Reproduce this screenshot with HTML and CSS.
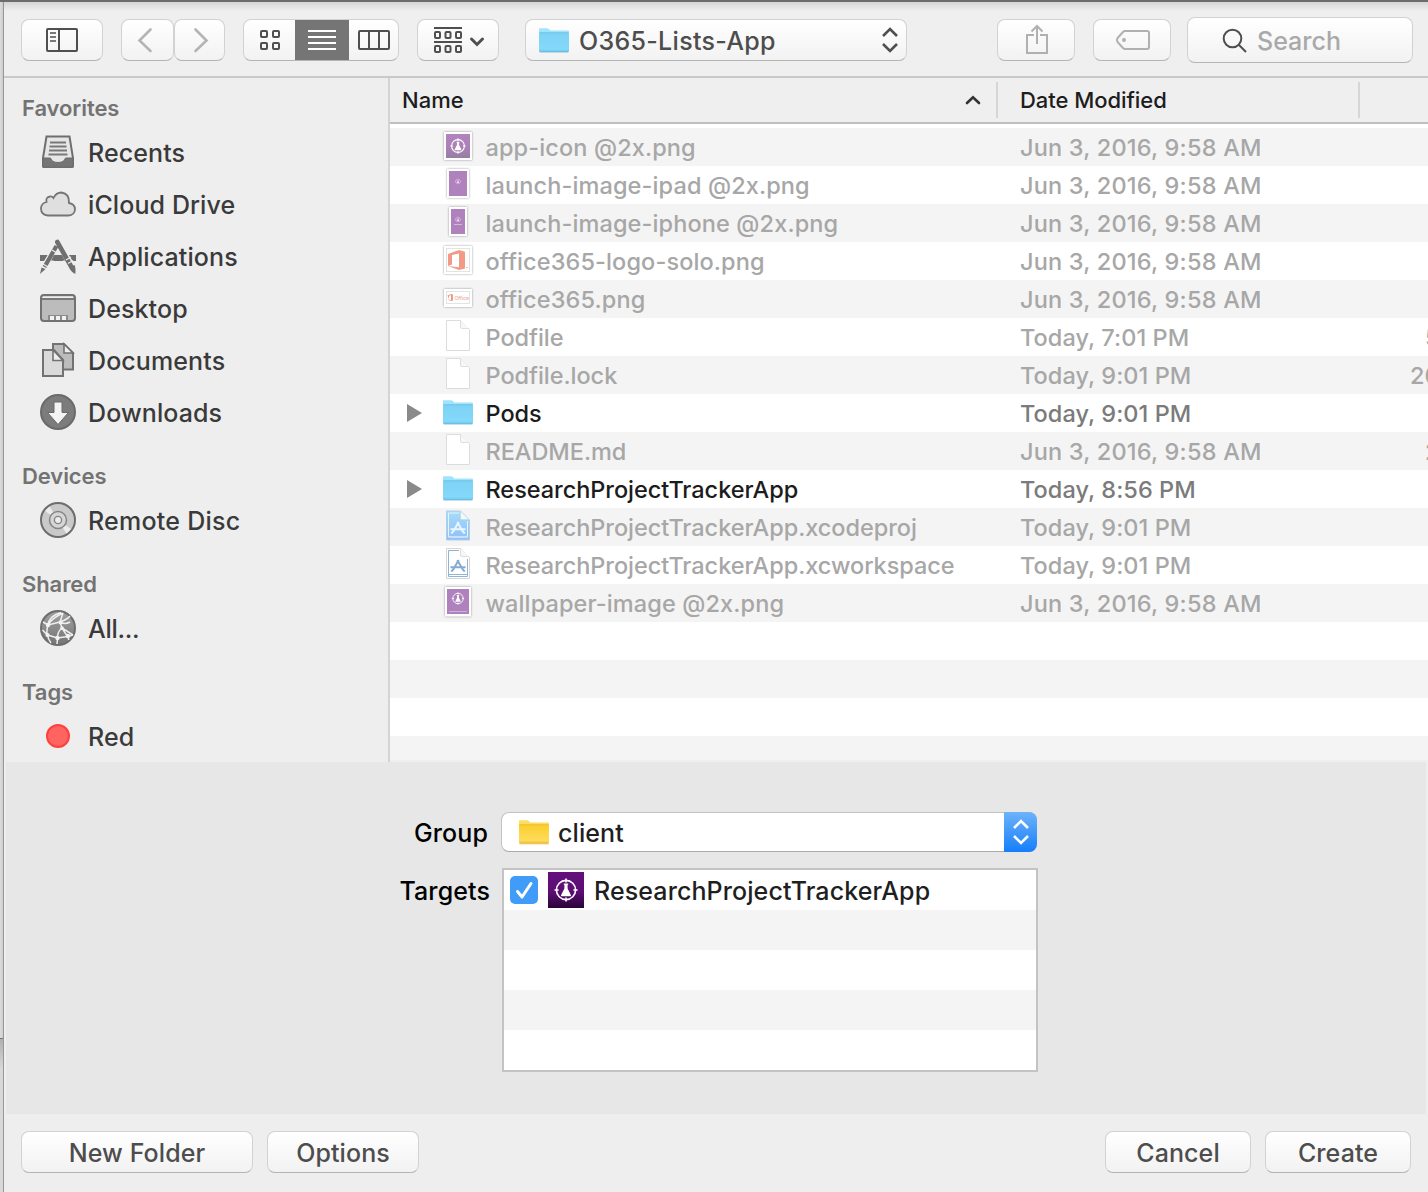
FILE: index.html
```html
<!DOCTYPE html>
<html lang="en">
<head>
<meta charset="utf-8">
<title>O365-Lists-App</title>
<link rel="stylesheet" href="styles.css">
</head>
<body>
<svg class="defs" width="0" height="0" aria-hidden="true">
  <defs>
    <linearGradient id="blueFolder" x1="0" y1="0" x2="0" y2="1"><stop offset="0" stop-color="#7dd3f5"/><stop offset="1" stop-color="#86dafb"/></linearGradient>
    <linearGradient id="goldFolder" x1="0" y1="0" x2="0" y2="1"><stop offset="0" stop-color="#fbce2c"/><stop offset="1" stop-color="#ffde68"/></linearGradient>
    <linearGradient id="fadedPurple" x1="0" y1="0" x2="0" y2="1"><stop offset="0" stop-color="#b184be"/><stop offset=".6" stop-color="#ab7fb7"/><stop offset="1" stop-color="#9480a0"/></linearGradient>
    <linearGradient id="deepPurple" x1="0" y1="0" x2="0" y2="1"><stop offset="0" stop-color="#640f7d"/><stop offset=".55" stop-color="#5c0e74"/><stop offset="1" stop-color="#2a0438"/></linearGradient>
    <linearGradient id="projBlue" x1="0" y1="0" x2="0" y2="1"><stop offset="0" stop-color="#a5dcf8"/><stop offset="1" stop-color="#8fbffa"/></linearGradient>
    <linearGradient id="globe" x1="0" y1="0" x2="0" y2="1"><stop offset="0" stop-color="#a2a2a2"/><stop offset="1" stop-color="#747474"/></linearGradient>
    <symbol id="folder-shape" viewBox="0 0 30 25">
      <path d="M0 3V1.2Q0 .2 1 .2H8Q9 .2 9.8 1L11.2 2.6H29Q30 2.6 30 3.6V6H0z" fill="#9fe3fc"/>
      <rect y="4.6" width="30" height="19.4" rx="1" fill="url(#blueFolder)"/>
      <path d="M.5 4.8H29.5" stroke="#68bfe2" stroke-width=".8"/>
      <path d="M0 22.2H30" stroke="#6dc6e8" stroke-width=".7"/>
      <path d="M.6 23.9H29.4" stroke="#52a9cd" stroke-width=".9"/>
    </symbol>
    <symbol id="flask" viewBox="0 0 24 24">
      <circle cx="12" cy="12" r="9.6" fill="none" stroke="#fff" stroke-width="1.6"/>
      <path d="M12 .5V4.6M12 19.4V23.5M.5 12H4.6M19.4 12H23.5" stroke="#fff" stroke-width="1.6"/>
      <path d="M9.8 5.6H14.2V6.8H13.6V10.4L17 17.2Q17.3 18.2 16.2 18.2H7.8Q6.7 18.2 7 17.2L10.4 10.4V6.8H9.8z" fill="#fff"/>
    </symbol>
    <symbol id="file-blank" viewBox="0 0 38 38">
      <path d="M7.5 2.5H21.5L30.5 11.5V32.5H7.5z" fill="#fff" stroke="#dcdcdc" stroke-width="1"/>
      <path d="M21.5 2.5V9Q21.5 10.5 23 10.5H30" fill="#f7f7f7" stroke="#dedede" stroke-width="1"/>
    </symbol>
    <symbol id="app-a" viewBox="0 0 18 14">
      <path d="M9.800 .5L3.500 11.500M8.200 .5L14.500 11.500M.5 8.800H17.500M3.500 11L1.500 13.600M14.500 11L16.500 13.600" fill="none" stroke="currentColor" stroke-width="2.200"/>
    </symbol>
  </defs>
</svg>

<div class="desktop">
  <div class="edge"><div class="edge-top"></div><div class="edge-bottom"></div></div>
  <main class="window">
    <header class="toolbar">
      <button class="btn tb w82"><svg viewBox="21 19 82 42" fill="none" stroke="#4f4f4f" stroke-width="2"><rect x="47" y="29" width="30" height="22" rx="1"/><path d="M59 29V51"/><path d="M50 33H56M50 37H56M50 41H56" stroke-width="1.6"/></svg></button>
      <div class="nav">
        <button class="btn tb w53"><svg viewBox="121 19 53 42" fill="none" stroke="#b4b4b4" stroke-width="2.6" stroke-linecap="round"><path d="M150.5 29.500L139.500 40.500L150.500 51"/></svg></button>
        <button class="btn tb w51"><svg viewBox="174 19 51 42" fill="none" stroke="#b4b4b4" stroke-width="2.6" stroke-linecap="round"><path d="M195.500 29.500L206.500 40.500L195.500 51"/></svg></button>
      </div>
      <div class="btn views">
        <svg class="v1" viewBox="243 19 52 42" fill="none" stroke="#4f4f4f" stroke-width="2"><rect x="261" y="31" width="6" height="6" rx="1"/><rect x="273" y="31" width="6" height="6" rx="1"/><rect x="261" y="43" width="6" height="6" rx="1"/><rect x="273" y="43" width="6" height="6" rx="1"/></svg>
        <svg class="v2" viewBox="295 19 54 42" stroke="#fff" stroke-width="2"><path d="M308 31H336M308 37H336M308 43H336M308 49H336"/></svg>
        <svg class="v3" viewBox="349 19 50 42" fill="none" stroke="#4f4f4f" stroke-width="2"><rect x="359" y="31" width="30" height="18" rx="1"/><path d="M369 31V49M379 31V49"/></svg>
      </div>
      <button class="btn tb w82"><svg viewBox="417 19 82 42" fill="none" stroke="#4f4f4f" stroke-width="2"><path d="M434 28H462M434 42H462"/><rect x="435" y="32" width="5" height="6" rx="1"/><rect x="445.500" y="32" width="5" height="6" rx="1"/><rect x="456" y="32" width="5" height="6" rx="1"/><rect x="435" y="46" width="5" height="6" rx="1"/><rect x="445.500" y="46" width="5" height="6" rx="1"/><rect x="456" y="46" width="5" height="6" rx="1"/><path d="M471.500 39L477 44.500L482.500 39" stroke-width="3" stroke-linecap="round"/></svg></button>
      <button class="btn tb path">
        <svg class="folder" viewBox="0 0 30 25"><use href="#folder-shape"/></svg>
        <span class="t">O365-Lists-App</span>
        <svg class="updown" viewBox="0 0 16 26" fill="none" stroke="#4f4f4f" stroke-width="2.600"><path d="M1 9L8 2L15 9M1 17L8 24L15 17"/></svg>
      </button>
      <button class="btn tb w78 share"><svg viewBox="997 19 78 42" fill="none" stroke="#b0b0b0" stroke-width="2"><path d="M1034 35H1027V53H1047V35H1040M1037 44V26M1031.500 31.500L1037 26L1042.500 31.500"/></svg></button>
      <button class="btn tb w78"><svg viewBox="1093 19 78 42" fill="none" stroke="#b0b0b0" stroke-width="2"><path d="M1125 31H1147Q1149 31 1149 33V47Q1149 49 1147 49H1125Q1124 49 1123 48L1117.500 42Q1116.500 40 1117.500 38L1123 32Q1124 31 1125 31z"/><circle cx="1124" cy="40" r="2" fill="#b0b0b0" stroke="none"/></svg></button>
      <div class="btn search">
        <svg viewBox="0 0 26 26" fill="none" stroke="#4f4f4f" stroke-width="2"><circle cx="10.500" cy="10.500" r="8.800"/><path d="M17 17L24 24"/></svg>
        <span class="t">Search</span>
      </div>
    </header>

    <section class="browser">
      <nav class="sidebar">
        <h2><span class="t">Favorites</span></h2>
        <a class="item"><svg viewBox="0 0 36 36"><path d="M6.500 2.500H29.500L33 24V32.500Q33 33 32 33H4Q3 33 3 32.500V24z" fill="#e6e6e6" stroke="#6e6e6e" stroke-width="2"/><path d="M3 24H10.500Q12 28.500 18 28.500T25.500 24H33L32.500 33H3.500z" fill="#757575" stroke="#6e6e6e"/><path d="M10 8.500H26M9.500 12.500H26.500M9 16.500H27M8.500 20.500H27.500" stroke="#787878" stroke-width="1.800"/></svg><span class="t">Recents</span></a>
        <a class="item"><svg viewBox="0 0 36 36"><path d="M8 29.500Q1 29 1 22.500Q1 17.500 6.500 16Q5.500 11 10 10.500Q12 10.200 13.500 12Q16 6.500 21.500 6.500Q29.500 7.500 29 17Q35 18 35 23.500Q34.500 29 28.500 29.500z" fill="#dfdfdf" stroke="#757575" stroke-width="1.800"/></svg><span class="t">iCloud Drive</span></a>
        <a class="item"><svg viewBox="0 0 36 36"><path d="M0 17H36V23H0z" fill="#6f6f6f"/><path d="M20 4L4.500 30M16 4L33 31" stroke="#eee" stroke-width="8"/><path d="M18 5L24 17H12z" fill="#eee"/><path d="M14 17H22L25 22.500H11z" fill="#6f6f6f"/><path d="M16.500 8L4.500 29" stroke="#6f6f6f" stroke-width="4.200"/><path d="M17.300 4L32 30" stroke="#6f6f6f" stroke-width="4.600" stroke-linecap="round"/><path d="M12 12L16 14.500M3 26L8 29M26 22L31 19M28 25.500L33 22.500" stroke="#eee" stroke-width="1.200"/><path d="M1.500 29.500L5.500 31L0 36zM29.500 29L34.500 27Q36 30 35.300 36Q30.500 34 29.500 29z" fill="#6f6f6f"/></svg><span class="t">Applications</span></a>
        <a class="item"><svg viewBox="0 0 36 36"><rect x="1" y="5" width="34" height="26" rx="3" fill="#bcbcbc" stroke="#727272" stroke-width="2"/><path d="M3 6.500H33V8H2z" fill="#eee"/><path d="M2 9H34" stroke="#727272" stroke-width="1.800"/><path d="M8 25H28V30H8z" fill="#8c8c8c"/><path d="M10 26H14V30H10zM16 26H20V30H16zM22 26H26V30H22z" fill="#f2f2f2"/></svg><span class="t">Desktop</span></a>
        <a class="item"><svg viewBox="0 0 36 36"><path d="M13 2H24L33 11V27.500H13z" fill="#bcbcbc" stroke="#727272" stroke-width="2"/><path d="M24 2V11H33z" fill="#eee" stroke="#727272" stroke-width="1.600"/><path d="M3 8H14L23 18V34H3z" fill="#dadada" stroke="#727272" stroke-width="2"/><path d="M13 8V18.500H23z" fill="#eee" stroke="#727272" stroke-width="1.600"/></svg><span class="t">Documents</span></a>
        <a class="item"><svg viewBox="0 0 36 36"><circle cx="18" cy="18" r="17" fill="#7c7c7c" stroke="#6a6a6a" stroke-width="2"/><path d="M14 8H22V18.500H28.500L18 30.500L7.500 18.500H14z" fill="#f4f4f4" stroke="#6a6a6a" stroke-width="1"/></svg><span class="t">Downloads</span></a>
        <h2><span class="t">Devices</span></h2>
        <a class="item disc"><svg viewBox="0 0 36 36"><circle cx="18" cy="18" r="17" fill="#c9c9c9" stroke="#6d6d6d" stroke-width="2"/><path d="M18 18L5 9L9.500 4.500zM18 18L31 27L26.500 31.500z" fill="#ececec"/><circle cx="18" cy="18" r="8.500" fill="#d6d6d6" stroke="#858585" stroke-width="1.500"/><circle cx="18" cy="18" r="3.600" fill="#ededed" stroke="#858585" stroke-width="1.400"/></svg><span class="t">Remote Disc</span></a>
        <h2><span class="t">Shared</span></h2>
        <a class="item all"><svg viewBox="0 0 36 36"><circle cx="18" cy="18" r="17" fill="url(#globe)" stroke="#6d6d6d" stroke-width="2"/><g fill="none" stroke="#efefef" stroke-width="1.500"><path d="M21 2.500Q9 6 8 15Q6 22 7.500 25Q8 29 11 33M3 12L8 15L20 12Q28 9 30 6M20 12L23 3M20 12L22 18L33 25M20 12Q25 15 30 12M22 18Q17 22 17.500 29L17 34M2.500 20L7.500 25L17.500 28L27.500 26.500L33 25M22 18L27.500 26.500L29 30M8 15Q12 8 23 3"/></g><g fill="#f2f2f2"><circle cx="8" cy="15" r="2.200"/><circle cx="20.500" cy="12.500" r="2"/><circle cx="7.500" cy="25" r="2"/><circle cx="17.500" cy="28" r="2.200"/><circle cx="28" cy="26" r="2.200"/><circle cx="22" cy="18" r="1.800"/></g></svg><span class="t">All...</span></a>
        <h2><span class="t">Tags</span></h2>
        <a class="item"><svg viewBox="0 0 36 36"><circle cx="18" cy="18" r="11" fill="#ff6460" stroke="#ff413d" stroke-width="2"/></svg><span class="t">Red</span></a>
      </nav>

      <div class="files">
        <div class="head">
          <div class="col-name"><span class="t">Name</span><svg width="16" height="10" viewBox="0 0 16 10" fill="none" stroke="#333" stroke-width="2.600" stroke-linecap="round"><path d="M2 8L8 2.200L14 8"/></svg></div>
          <div class="col-date"><span class="t">Date Modified</span></div>
        </div>
        <div class="rows">
          <div class="row img"><i></i><svg class="ico" viewBox="0 0 38 38"><rect class="frame" x="5" y="4" width="28" height="28"/><rect x="7" y="6" width="24" height="24" fill="url(#fadedPurple)"/><use href="#flask" x="11" y="10" width="16" height="16"/></svg><span class="t">app-icon @2x.png</span><span class="t full">Jun 3, 2016, 9:58 AM</span></div>
          <div class="row img"><i></i><svg class="ico" viewBox="0 0 38 38"><rect class="frame" x="8" y="3" width="22" height="29"/><rect x="10" y="5" width="18" height="25" fill="#b082bd"/><use href="#flask" x="16" y="12.500" width="6" height="6" opacity=".7"/></svg><span class="t">launch-image-ipad @2x.png</span><span class="t full">Jun 3, 2016, 9:58 AM</span></div>
          <div class="row img"><i></i><svg class="ico" viewBox="0 0 38 38"><rect class="frame" x="10" y="3" width="18" height="29"/><rect x="12" y="5" width="14" height="25" fill="#b082bd"/><use href="#flask" x="16" y="12.500" width="6" height="6" opacity=".7"/><path d="M15 20.500H23" stroke="#d3b8da"/></svg><span class="t">launch-image-iphone @2x.png</span><span class="t full">Jun 3, 2016, 9:58 AM</span></div>
          <div class="row img"><i></i><svg class="ico" viewBox="0 0 38 38"><rect class="frame" x="5" y="4" width="28" height="28"/><rect x="7.500" y="6.500" width="23" height="23" fill="#fff" stroke="#e3e3e3"/><path d="M9 12L20 8L26 9.800V26.500L20 28L9 24L20 25.300V11.500L13 13V22.500L9 24z" fill="#f29a85"/><path d="M27 25.500H29" stroke="#f6c4b8"/></svg><span class="t">office365-logo-solo.png</span><span class="t full">Jun 3, 2016, 9:58 AM</span></div>
          <div class="row img"><i></i><svg class="ico" viewBox="0 0 38 38"><rect class="frame" x="5" y="9" width="28" height="18"/><rect x="7.500" y="11.500" width="23" height="12" fill="#fff" stroke="#e3e3e3"/><path d="M8.500 15.500L12 14L14 14.600V20.400L12 21L8.500 19.600L12 20V15.200L10 15.800V19z" fill="#f29a85"/><text class="office" x="15.500" y="19.500">Office</text></svg><span class="t">office365.png</span><span class="t full">Jun 3, 2016, 9:58 AM</span></div>
          <div class="row"><i></i><svg class="ico" viewBox="0 0 38 38"><use href="#file-blank"/></svg><span class="t">Podfile</span><span class="t day">Today, 7:01 PM</span><span class="size">5</span></div>
          <div class="row"><i></i><svg class="ico" viewBox="0 0 38 38"><use href="#file-blank"/></svg><span class="t">Podfile.lock</span><span class="t day">Today, 9:01 PM</span><span class="size wide">20</span></div>
          <div class="row on"><i class="tri"></i><svg class="ico" viewBox="0 0 38 38"><use href="#folder-shape" x="4" y="6" width="30" height="25"/></svg><span class="t">Pods</span><span class="t day">Today, 9:01 PM</span></div>
          <div class="row"><i></i><svg class="ico" viewBox="0 0 38 38"><use href="#file-blank"/></svg><span class="t">README.md</span><span class="t full">Jun 3, 2016, 9:58 AM</span><span class="size">2</span></div>
          <div class="row on"><i class="tri"></i><svg class="ico" viewBox="0 0 38 38"><use href="#folder-shape" x="4" y="6" width="30" height="25"/></svg><span class="t">ResearchProjectTrackerApp</span><span class="t day">Today, 8:56 PM</span></div>
          <div class="row"><i></i><svg class="ico" viewBox="0 0 38 38"><path d="M7.500 3H21.500L30.500 12V32H7.500z" fill="url(#projBlue)" stroke="#b5cfe2"/><path d="M9.500 29V5H20M28.500 13V29" fill="none" stroke="#e3f4fd"/><path d="M9.500 29H28.500" stroke="#eaf5fe" stroke-width="1.200"/><path d="M21.500 3V10Q21.500 11.500 23 11.500H30z" fill="#f3f8fb" stroke="#c5d9e6" stroke-width=".8"/><path d="M21.500 2L31.500 12V2z" fill="#f4f4f4"/><use href="#app-a" x="11" y="13.500" width="16" height="12.500" color="#e9f6ff"/></svg><span class="t">ResearchProjectTrackerApp.xcodeproj</span><span class="t day">Today, 9:01 PM</span></div>
          <div class="row"><i></i><svg class="ico" viewBox="0 0 38 38"><path d="M7.500 2.500H21.500L30.500 11.500V32.500H7.500z" fill="#fff" stroke="#d6d6d6"/><path d="M20 4.500H9.500V30.500H28.500V13M9.500 28.500H28.500" fill="none" stroke="#8fb4d6"/><path d="M21.500 2.500V9Q21.500 10.500 23 10.500H30" fill="#f7f7f7" stroke="#dedede"/><use href="#app-a" x="11" y="13.500" width="16" height="12.500" color="#86abd0"/></svg><span class="t">ResearchProjectTrackerApp.xcworkspace</span><span class="t day">Today, 9:01 PM</span></div>
          <div class="row img"><i></i><svg class="ico" viewBox="0 0 38 38"><rect class="frame" x="6" y="3" width="26" height="29.500"/><rect x="8" y="5" width="22" height="25" fill="#b082bd"/><use href="#flask" x="12.500" y="8" width="13" height="13"/><path d="M10 27.500H28" stroke="#cfb2d7"/></svg><span class="t">wallpaper-image @2x.png</span><span class="t full">Jun 3, 2016, 9:58 AM</span></div>
          <div class="row"></div><div class="row"></div><div class="row"></div><div class="row last"></div>
        </div>
      </div>
    </section>

    <section class="panel">
      <div class="field">
        <label class="group-label"><span class="t">Group</span></label>
        <div class="popup">
          <svg class="folder" viewBox="0 0 30 25"><path d="M0 3V1.200Q0 .2 1 .2H8Q9 .2 9.800 1L11.200 2.600H29Q30 2.600 30 3.600V6H0z" fill="#ffdc62"/><rect y="4.600" width="30" height="19.400" rx="1" fill="url(#goldFolder)"/><path d="M.5 4.800H29.500" stroke="#e6b92b" stroke-width=".8"/><path d="M.5 22.200H29.500M.6 23.800H29.400" stroke="#e2b42c" stroke-width=".8"/></svg>
          <span class="t">client</span>
          <span class="stepper"><svg viewBox="0 0 16 26" fill="none" stroke="#fff" stroke-width="2.600"><path d="M1 9L8 2L15 9M1 17L8 24L15 17"/></svg></span>
        </div>
      </div>
      <div class="field">
        <label class="target-label"><span class="t">Targets</span></label>
        <div class="targets">
          <div class="target">
            <svg class="check" viewBox="0 0 28 28"><rect width="28" height="28" rx="5" fill="#419bf9"/><path d="M7.500 15.500L12 21L21 7.500" fill="none" stroke="#fff" stroke-width="3" stroke-linecap="round" stroke-linejoin="round"/></svg>
            <svg class="appicon" viewBox="0 0 36 36"><rect width="36" height="36" fill="url(#deepPurple)"/><use href="#flask" x="6" y="6" width="24" height="24"/></svg>
            <span class="t">ResearchProjectTrackerApp</span>
          </div>
          <div class="target"></div><div class="target"></div><div class="target"></div><div class="target"></div>
        </div>
      </div>
    </section>

    <footer class="footer">
      <button class="btn w232"><span class="t">New Folder</span></button>
      <button class="btn w152"><span class="t">Options</span></button>
      <button class="btn w146 cancel"><span class="t">Cancel</span></button>
      <button class="btn w146"><span class="t">Create</span></button>
    </footer>
  </main>
</div>
</body>
</html>
```
FILE: styles.css
```css
* { box-sizing: border-box; }
body { margin: 0; font-family: Inter, "Liberation Sans", sans-serif; font-weight: 450; color: #1d1d1d; overflow: hidden; }
.defs { position: absolute; }
button { font: inherit; color: inherit; letter-spacing: inherit; padding: 0; }
h2 { margin: 0; }
.t { white-space: pre; }
svg { display: block; flex: none; }

.desktop { display: flex; width: 1428px; height: 1192px; border-top: 2px solid #6c6c6c; }
.edge { width: 4px; flex: none; display: flex; flex-direction: column; border-right: 1px solid #979797; }
.edge-top { height: 1037px; background: linear-gradient(90deg, #dcdcdc, #cdcdcd); border-bottom: 1px solid #777; }
.edge-bottom { flex: 1; background: linear-gradient(#b0b0b0, #d8d8d8 30px); }
.window { flex: 1; min-width: 0; background: #efefef; display: flex; flex-direction: column; }

.btn { border: 1px solid #d2d2d2; border-bottom-color: #b4b4b4; border-radius: 8px; background: linear-gradient(#fff, #f2f2f2); display: flex; align-items: center; justify-content: center; overflow: hidden; height: 42px; flex: none; }
.btn .t { padding-top: 2px; }
.toolbar { height: 76px; border-bottom: 2px solid #c9c9c9; display: flex; align-items: flex-start; gap: 18px; padding: 17px 0 0 17px; background: linear-gradient(#d6d6d6, #efefef 9px); flex: none; font-size: 25px; color: #4d4d4d; }
.tb > svg, .views > svg { height: 42px; margin: -1px; }
.w82, .w82 > svg { width: 82px; }
.w53, .w53 > svg { width: 53px; }
.w51, .w51 > svg { width: 51px; }
.w78, .w78 > svg { width: 78px; }
.nav { display: flex; }
.views { width: 156px; justify-content: flex-start; }
.views .v1 { width: 52px; margin-right: 0; }
.views .v2 { width: 54px; margin: -1px 0; background: #757575; }
.views .v3 { width: 50px; margin-left: 0; }
.path { width: 382px; margin-left: 8px; justify-content: flex-start; padding-left: 13px; letter-spacing: .3px; }
.path .folder { width: 30px; height: 25px; margin: 1px 10px 0 0; }
.path .updown { width: 16px; height: 26px; margin: 0 8px 0 auto; }
.share { margin-left: 72px; }
.search { width: 226px; height: 46px; margin: -2px 0 0 -2px; justify-content: flex-start; padding-left: 34px; color: #a9a9a9; }
.search svg { width: 26px; height: 26px; margin: 1px 9px 0 0; }

.browser { display: flex; height: 684px; flex: none; }
.sidebar { width: 386px; border-right: 2px solid #d4d4d4; padding: 11px 0 0 18px; overflow: hidden; background: #eee; }
.sidebar h2 { font-size: 22px; font-weight: 600; line-height: 38px; color: #737373; padding-top: 18px; letter-spacing: -.08px; }
.sidebar h2:first-child { padding-top: 0; }
.item { display: flex; align-items: center; height: 52px; padding-left: 18px; gap: 12px; font-size: 25px; color: #3a3a3a; letter-spacing: .1px; }
.item svg { width: 36px; height: 36px; margin-top: -2px; }
.item.disc { letter-spacing: .24px; }
.item.all { letter-spacing: -.3px; }

.files { flex: 1; min-width: 0; background: #fff; height: 682px; overflow: hidden; display: flex; flex-direction: column; }
.head { height: 46px; border-bottom: 2px solid #bfbfbf; background: #efefef; display: flex; font-size: 22px; align-items: flex-start; padding-top: 4px; flex: none; }
.col-name, .col-date { height: 36px; display: flex; align-items: center; border-right: 2px solid #d6d6d6; }
.col-name { width: 608px; padding: 0 15px 0 12px; justify-content: space-between; font-weight: 500; }
.col-date { width: 362px; padding-left: 22px; letter-spacing: -.05px; }
.rows { padding-top: 4px; }
.row { display: grid; grid-template-columns: 49px 46.5px 534.5px 405px 3px; height: 38px; align-items: center; font-size: 23.5px; color: #a7a7a7; overflow: hidden; letter-spacing: -.04px; }
.row:nth-child(odd) { background: #f4f4f4; }
.row.on { color: #1c1c1c; }
.row.on .t:last-child { color: #7b7b7b; }
.row.img { letter-spacing: .12px; }
.row .full { letter-spacing: .2px; }
.row .day { letter-spacing: .06px; }
.row i { width: 15px; }
.tri { margin-left: 17px; height: 18px; background: #8a8a8a; clip-path: polygon(0 0, 100% 50%, 0 100%); }
.ico { width: 38px; height: 38px; }
.frame { fill: #fff; filter: drop-shadow(0 .8px 1px rgba(0, 0, 0, .4)); }
.office { font-size: 5px; fill: #eba698; letter-spacing: 0; }
.size { white-space: nowrap; }
.size.wide { margin-left: -15px; }

.panel { height: 352px; margin: 0 2px; background: #e7e7e7; padding: 50px 0 0; flex: none; display: flex; flex-direction: column; gap: 14px; font-size: 25px; color: #000; letter-spacing: .1px; }
.field { display: flex; align-items: flex-start; }
.field label { height: 42px; display: flex; align-items: center; justify-content: flex-end; }
.field .target-label { height: 46px; }
.group-label { width: 482px; margin-right: 13px; }
.target-label { width: 484px; margin-right: 12px; }
.popup { width: 536px; height: 40px; border: 1px solid #c3c3c3; border-bottom-color: #a9a9a9; border-radius: 8px; background: #fff; display: flex; align-items: center; padding-left: 17px; color: #1f1f1f; }
.popup .t, .target .t { padding-top: 2px; }
.popup .folder { width: 30px; height: 25px; margin-right: 9px; }
.stepper { width: 33px; height: 40px; margin: -1px -1px -1px auto; border-radius: 0 8px 8px 0; background: linear-gradient(#6cb3fa, #167efb); display: flex; align-items: center; justify-content: center; }
.stepper svg { width: 16px; height: 26px; }
.targets { width: 536px; border: 2px solid #c3c3c3; color: #1f1f1f; }
.target { height: 40px; background: #fff; display: flex; align-items: center; padding-left: 6px; }
.target:nth-child(even) { background: #f4f4f4; }
.check { width: 28px; height: 28px; margin-right: 10px; }
.appicon { width: 36px; height: 36px; margin-right: 10px; }

.footer { flex: 1; background: #eee; display: flex; gap: 14px; padding: 17px 17px 0; font-size: 25px; color: #4d4d4d; letter-spacing: .1px; }
.w232 { width: 232px; }
.w152 { width: 152px; }
.w146 { width: 146px; }
.cancel { margin-left: auto; }
```
